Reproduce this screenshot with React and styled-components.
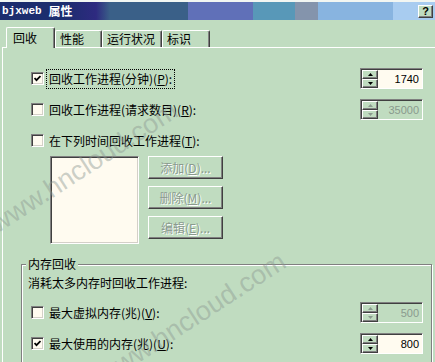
import React from "react";
import styled, { createGlobalStyle } from "styled-components";

const GREEN = "#c0dcc0";
const CREAM = "#fffbf0";

const GlobalStyle = createGlobalStyle`
  html, body { margin: 0; padding: 0; }
  body {
    background: ${GREEN};
    font-family: "Noto Sans CJK SC", "Liberation Sans", sans-serif;
    font-size: 12px;
    overflow: hidden;
  }
`;

const Window = styled.div`
  position: relative;
  width: 435px;
  height: 362px;
  overflow: hidden;
  background: ${GREEN};
  border-top: 2px solid #f2f6f2;
  box-sizing: border-box;
`;

const TitleBar = styled.div`
  height: 18px;
  display: flex;
  align-items: center;
  justify-content: space-between;
  padding: 0 2px;
  background: linear-gradient(
    to right,
    #1c2d6e 0,
    #1c2d6e 64px,
    #2e2a80 96px,
    #3a6088 110px,
    #3a6088 188px,
    #6070b8 188px,
    #6070b8 253px,
    #5898b8 253px,
    #5898b8 295px,
    #8494ac 295px,
    #8494ac 318px,
    #88b4e0 318px,
    #88b4e0 393px,
    #a8ccf0 393px
  );
`;

const Title = styled.div`
  display: flex;
  align-items: center;
  gap: 7px;
  color: #fff;
  font-weight: bold;
  line-height: 14px;
  .mono {
    font-family: "Liberation Mono", monospace;
    font-size: 11px;
  }
  .cjk {
    font-size: 12px;
  }
`;

const HelpButton = styled.div`
  width: 15px;
  height: 13px;
  box-sizing: border-box;
  background: ${GREEN};
  border-top: 1px solid #fff;
  border-left: 1px solid #fff;
  border-right: 1px solid #404040;
  border-bottom: 1px solid #404040;
  box-shadow: inset -1px -1px 0 #808080;
  font: bold 11px/11px "Liberation Sans", sans-serif;
  text-align: center;
  color: #000;
`;

const TabStrip = styled.div`
  height: 27px;
  display: flex;
  align-items: flex-end;
  padding-left: 6px;
`;

const Tab = styled.div`
  position: relative;
  z-index: ${(p) => (p.$active ? 1 : 0)};
  width: ${(p) => p.$w}px;
  height: ${(p) => (p.$active ? 21 : 17)}px;
  margin-bottom: ${(p) => (p.$active ? -1 : 0)}px;
  box-sizing: border-box;
  background: ${GREEN};
  border-top: 1px solid #fff;
  border-left: 1px solid #fff;
  border-right: 1px solid #404040;
  box-shadow: inset -1px 0 0 #808080;
  border-radius: 2px 2px 0 0;
  padding-left: ${(p) => (p.$active ? 6 : 4)}px;
  padding-top: ${(p) => (p.$active ? 3 : 1)}px;
  line-height: 14px;
  color: #000;
`;

const Panel = styled.div`
  margin-left: 2px;
  border-top: 1px solid #fff;
  border-left: 1px solid #fff;
  padding-top: 20px;
`;

const Section = styled.div`
  display: flex;
  flex-direction: column;
  gap: 10px;
  padding: 0 12px 0 28px;
`;

const Row = styled.div`
  height: 21px;
  display: flex;
  align-items: center;
  justify-content: space-between;
  padding-left: ${(p) => p.$indent || 0}px;
`;

const CheckItem = styled.label`
  display: flex;
  align-items: center;
  gap: 3px;
  color: #000;
`;

const Box = styled.span`
  width: 13px;
  height: 13px;
  box-sizing: border-box;
  background: ${CREAM};
  border-top: 1px solid #808080;
  border-left: 1px solid #808080;
  border-right: 1px solid #fff;
  border-bottom: 1px solid #fff;
  box-shadow: inset 1px 1px 0 #404040, inset -1px -1px 0 #d4d0c8;
  display: flex;
  align-items: center;
  justify-content: center;
`;

const LabelText = styled.span`
  padding: 2px 2px;
  line-height: 14px;
  outline: ${(p) => (p.$focus ? "1px dotted #000" : "none")};
  outline-offset: 0;
  white-space: nowrap;
`;

const Spin = styled.div`
  width: 63px;
  height: 21px;
  box-sizing: border-box;
  display: flex;
  background: ${GREEN};
  border-top: 1px solid #808080;
  border-left: 1px solid #808080;
  border-right: 1px solid #fff;
  border-bottom: 1px solid #fff;
  box-shadow: inset 1px 1px 0 #404040;
  padding: 1px 0 0 1px;
`;

const SpinButtons = styled.div`
  width: 16px;
  display: flex;
  flex-direction: column;
`;

const SpinButton = styled.div`
  flex: 1;
  box-sizing: border-box;
  background: ${GREEN};
  border-top: 1px solid #fff;
  border-left: 1px solid #fff;
  border-right: 1px solid #404040;
  border-bottom: 1px solid #404040;
  box-shadow: inset -1px -1px 0 #808080;
  display: flex;
  align-items: center;
  justify-content: center;
`;

const SpinField = styled.div`
  flex: 1;
  background: ${(p) => (p.$disabled ? GREEN : CREAM)};
  color: ${(p) => (p.$disabled ? "#8a9a8e" : "#000")};
  font: 11px/18px "Liberation Sans", sans-serif;
  text-align: right;
  padding-right: 3px;
`;

const ListArea = styled.div`
  display: flex;
  gap: 9px;
  margin: -5px 0 0 19px;
`;

const ListBox = styled.div`
  width: 89px;
  height: 88px;
  box-sizing: border-box;
  background: ${CREAM};
  border-top: 1px solid #808080;
  border-left: 1px solid #808080;
  border-right: 1px solid #fff;
  border-bottom: 1px solid #fff;
  box-shadow: inset 1px 1px 0 #404040, inset -1px -1px 0 #d4d0c8;
`;

const ButtonCol = styled.div`
  display: flex;
  flex-direction: column;
  gap: 7px;
`;

const Button = styled.div`
  width: 75px;
  height: 23px;
  box-sizing: border-box;
  background: ${GREEN};
  border-top: 1px solid #fff;
  border-left: 1px solid #fff;
  border-right: 1px solid #404040;
  border-bottom: 1px solid #404040;
  box-shadow: inset -1px -1px 0 #808080;
  display: flex;
  align-items: center;
  justify-content: center;
  color: #8a9a8e;
  text-shadow: 1px 1px 0 #fff;
  line-height: 14px;
  white-space: nowrap;
`;

const Group = styled.fieldset`
  margin: 13px 3px 0 18px;
  padding: 5px 8px 30px 6px;
  border: 1px solid #808080;
  box-shadow: inset 1px 1px 0 #fff, 1px 1px 0 #fff;
  display: flex;
  flex-direction: column;
  gap: 10px;
`;

const Legend = styled.legend`
  padding: 0 2px;
  margin-left: -2px;
  line-height: 14px;
  background: ${GREEN};
  color: #000;
`;

const GroupNote = styled.div`
  line-height: 14px;
  color: #000;
  margin-bottom: 2px;
`;

const Watermark = styled.div`
  position: absolute;
  left: ${(p) => p.$x}px;
  top: ${(p) => p.$y}px;
  font: 27px/27px "Liberation Sans", sans-serif;
  color: rgba(140, 152, 146, 0.45);
  transform: rotate(-33deg);
  transform-origin: 0 100%;
  white-space: nowrap;
  pointer-events: none;
`;

function Arrow({ up, disabled }) {
  return (
    <svg width="5" height="3" viewBox="0 0 5 3">
      <path
        d={up ? "M2.5 0 L5 3 L0 3 Z" : "M0 0 L5 0 L2.5 3 Z"}
        fill={disabled ? "#8a9a8e" : "#000"}
      />
    </svg>
  );
}

function Spinner({ value, disabled }) {
  return (
    <Spin>
      <SpinButtons>
        <SpinButton>
          <Arrow up disabled={disabled} />
        </SpinButton>
        <SpinButton>
          <Arrow disabled={disabled} />
        </SpinButton>
      </SpinButtons>
      <SpinField $disabled={disabled}>{value}</SpinField>
    </Spin>
  );
}

function Check({ checked, focus, children }) {
  return (
    <CheckItem>
      <Box>
        {checked && (
          <svg width="7" height="7" viewBox="0 0 7 7">
            <path d="M0.5 3 L2.5 5.2 L6.5 1" stroke="#000" strokeWidth="1.8" fill="none" />
          </svg>
        )}
      </Box>
      <LabelText $focus={focus}>{children}</LabelText>
    </CheckItem>
  );
}

export default function App() {
  return (
    <>
      <GlobalStyle />
      <Window>
        <TitleBar>
          <Title>
            <span className="mono">bjxweb</span>
            <span className="cjk">属性</span>
          </Title>
          <HelpButton>?</HelpButton>
        </TitleBar>
        <TabStrip>
          <Tab $active $w={49}>回收</Tab>
          <Tab $w={47}>性能</Tab>
          <Tab $w={60}>运行状况</Tab>
          <Tab $w={48}>标识</Tab>
        </TabStrip>
        <Panel>
          <Section>
            <Row>
              <Check checked focus>
                回收工作进程(分钟)(<u>P</u>):
              </Check>
              <Spinner value="1740" />
            </Row>
            <Row>
              <Check>
                回收工作进程(请求数目)(<u>R</u>):
              </Check>
              <Spinner value="35000" disabled />
            </Row>
            <Row>
              <Check>
                在下列时间回收工作进程(<u>T</u>):
              </Check>
            </Row>
            <ListArea>
              <ListBox />
              <ButtonCol>
                <Button>添加(<u>D</u>)...</Button>
                <Button>删除(<u>M</u>)...</Button>
                <Button>编辑(<u>E</u>)...</Button>
              </ButtonCol>
            </ListArea>
          </Section>
          <Group>
            <Legend>内存回收</Legend>
            <GroupNote>消耗太多内存时回收工作进程:</GroupNote>
            <Row $indent={3}>
              <Check>
                最大虚拟内存(兆)(<u>V</u>):
              </Check>
              <Spinner value="500" disabled />
            </Row>
            <Row $indent={3}>
              <Check checked>
                最大使用的内存(兆)(<u>U</u>):
              </Check>
              <Spinner value="800" />
            </Row>
          </Group>
        </Panel>
        <Watermark $x={0} $y={209}>www.hncloud.com</Watermark>
        <Watermark $x={108} $y={360}>www.hncloud.com</Watermark>
      </Window>
    </>
  );
}
